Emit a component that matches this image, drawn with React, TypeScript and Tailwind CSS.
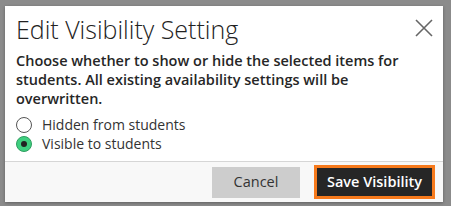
import React from "react";

export default function App() {
  const font = { fontFamily: '"Open Sans", "Noto Sans", sans-serif' };
  return (
    <div
      className="w-[451px] h-[206px] bg-[#8b8b8b] pt-[6px] pl-[5px] overflow-hidden"
      style={font}
    >
      <div className="w-[438px] h-[196px] bg-white flex flex-col shadow-[0_1px_3px_rgba(0,0,0,0.3)]">
        <div className="flex-1 pl-[11px] pr-[10px] pt-[7px]">
          <div className="flex items-start justify-between">
            <h1 className="text-[25px] leading-[32px] font-light text-[#222]">
              Edit Visibility Setting
            </h1>
            <button className="mt-[6px] w-[18px] h-[18px] flex items-center justify-center">
              <svg width="18" height="18" viewBox="0 0 18 18">
                <path d="M1 1 L17 17 M17 1 L1 17" stroke="#666" strokeWidth="1.6" fill="none" />
              </svg>
            </button>
          </div>
          <p className="mt-[6px] text-[14.5px] leading-[19px] font-semibold text-[#262626] w-[400px]">
            Choose whether to show or hide the selected items for students. All existing availability settings will be overwritten.
          </p>
          <div className="mt-[7px] flex flex-col">
            <label className="flex items-center h-[19px] text-[14px] text-[#333]">
              <span className="w-[16px] h-[16px] rounded-full border border-[#555] bg-white mr-[10px]" />
              Hidden from students
            </label>
            <label className="flex items-center h-[19px] text-[14px] text-[#333]">
              <span className="w-[16px] h-[16px] rounded-full border border-[#2f9e60] bg-[#3ecf7f] mr-[10px] flex items-center justify-center">
                <span className="w-[6px] h-[6px] rounded-full bg-[#222]" />
              </span>
              Visible to students
            </label>
          </div>
        </div>
        <div className="h-[41px] border-t border-[#d6d6d6] bg-[#f8f8f8] flex items-center justify-end pr-[8px] gap-[14px]">
          <button className="w-[88px] h-[31px] bg-[#cdcdcd] text-[14.5px] text-[#333]">
            Cancel
          </button>
          <button className="w-[121px] h-[34px] border-[3px] border-[#f77a1c] bg-[#262626] text-[14.5px] font-semibold text-white">
            Save Visibility
          </button>
        </div>
      </div>
    </div>
  );
}
